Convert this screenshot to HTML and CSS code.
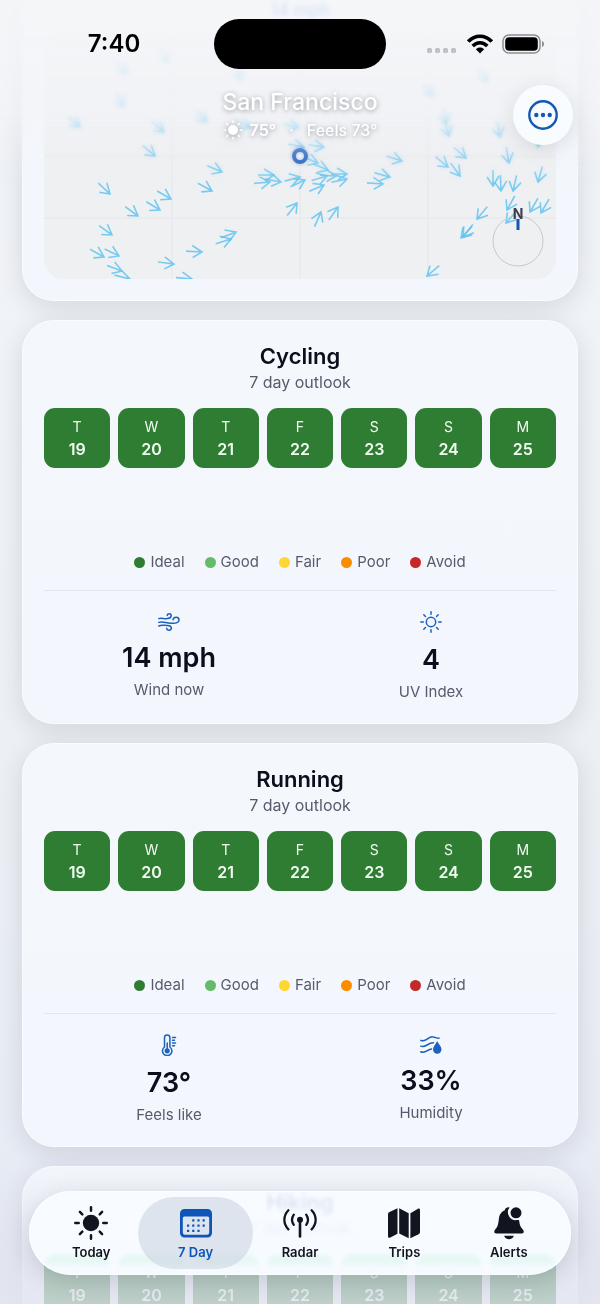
FILE: index.html
```html
<!DOCTYPE html>
<html lang="en">
<head>
<meta charset="utf-8">
<meta name="viewport" content="width=device-width, initial-scale=1">
<title>7 Day Outlook</title>
<link rel="stylesheet" href="styles.css">
</head>
<body>
<div class="app">
  <main class="feed">
    <section class="card map-card" aria-label="Wind map">
      <p class="map-value">14 mph</p>
      <svg class="map" viewBox="44 34 512 245" preserveAspectRatio="xMidYMax slice" role="img" aria-label="Wind directions">
        <defs>
          <g id="a"><path d="M-16 0H0M-10-6L0 0L-9 6"/></g>
        </defs>
        <path class="map-grid" d="M172 34V279M300 34V279M428 34V279M44 94H556M44 156H556M44 218H556"/>
        <g class="arrows">
          <use href="#a" transform="translate(80 127) rotate(40)"/>
          <use href="#a" transform="translate(124 107) rotate(60)"/>
          <use href="#a" transform="translate(127 74) rotate(50)"/>
          <use href="#a" transform="translate(168 62) rotate(60)"/>
          <use href="#a" transform="translate(164 132) rotate(40)"/>
          <use href="#a" transform="translate(207 122) rotate(45)"/>
          <use href="#a" transform="translate(241 80) rotate(70)"/>
          <use href="#a" transform="translate(250 128) rotate(30)"/>
          <use href="#a" transform="translate(299 127) rotate(10)"/>
          <use href="#a" transform="translate(304 147) rotate(10)"/>
          <use href="#a" transform="translate(324 147) rotate(8)"/>
          <use href="#a" transform="translate(433 96) rotate(50)"/>
          <use href="#a" transform="translate(446 124) rotate(80)"/>
          <use href="#a" transform="translate(449 136) rotate(75)"/>
          <use href="#a" transform="translate(487 82) rotate(60)"/>
          <use href="#a" transform="translate(500 137) rotate(80)"/>
          <use href="#a" transform="translate(538 147) rotate(100)"/>
          <use href="#a" transform="translate(155 156) rotate(40)"/>
          <use href="#a" transform="translate(222 172) rotate(23)"/>
          <use href="#a" transform="translate(212 191) rotate(29)"/>
          <use href="#a" transform="translate(110 194) rotate(43)"/>
          <use href="#a" transform="translate(171 199) rotate(30)"/>
          <use href="#a" transform="translate(160 210) rotate(31)"/>
          <use href="#a" transform="translate(138 216) rotate(36)"/>
          <use href="#a" transform="translate(112 235) rotate(36)"/>
          <use href="#a" transform="translate(104 257) rotate(29)"/>
          <use href="#a" transform="translate(119 256) rotate(26)"/>
          <use href="#a" transform="translate(122 271) rotate(20)"/>
          <use href="#a" transform="translate(130 279) rotate(14)"/>
          <use href="#a" transform="translate(192 279) rotate(5)"/>
          <use href="#a" transform="translate(174 264) rotate(7)"/>
          <use href="#a" transform="translate(202 252) rotate(3)"/>
          <use href="#a" transform="translate(231 239) rotate(-17)"/>
          <use href="#a" transform="translate(236 232) rotate(-21)"/>
          <use href="#a" transform="translate(274 175) rotate(0)"/>
          <use href="#a" transform="translate(270 182) rotate(-5)"/>
          <use href="#a" transform="translate(281 182) rotate(11)"/>
          <use href="#a" transform="translate(300 177) rotate(-15)"/>
          <use href="#a" transform="translate(297 203) rotate(-52)"/>
          <use href="#a" transform="translate(305 180) rotate(-25)"/>
          <use href="#a" transform="translate(328 170) rotate(22)"/>
          <use href="#a" transform="translate(318 163) rotate(22)"/>
          <use href="#a" transform="translate(336 176) rotate(3)"/>
          <use href="#a" transform="translate(347 174) rotate(0)"/>
          <use href="#a" transform="translate(347 179) rotate(-12)"/>
          <use href="#a" transform="translate(327 176) rotate(-16)"/>
          <use href="#a" transform="translate(324 185) rotate(-23)"/>
          <use href="#a" transform="translate(402 161) rotate(17)"/>
          <use href="#a" transform="translate(390 177) rotate(15)"/>
          <use href="#a" transform="translate(383 184) rotate(4)"/>
          <use href="#a" transform="translate(321 212) rotate(-66)"/>
          <use href="#a" transform="translate(338 207) rotate(-55)"/>
          <use href="#a" transform="translate(448 167) rotate(39)"/>
          <use href="#a" transform="translate(460 176) rotate(54)"/>
          <use href="#a" transform="translate(466 158) rotate(41)"/>
          <use href="#a" transform="translate(509 163) rotate(80)"/>
          <use href="#a" transform="translate(493 186) rotate(90)"/>
          <use href="#a" transform="translate(501 191) rotate(88)"/>
          <use href="#a" transform="translate(513 191) rotate(103)"/>
          <use href="#a" transform="translate(538 182) rotate(106)"/>
          <use href="#a" transform="translate(507 210) rotate(119)"/>
          <use href="#a" transform="translate(530 212) rotate(120)"/>
          <use href="#a" transform="translate(541 213) rotate(120)"/>
          <use href="#a" transform="translate(477 219) rotate(130)"/>
          <use href="#a" transform="translate(506 223) rotate(131)"/>
          <use href="#a" transform="translate(461 238) rotate(134)"/>
          <use href="#a" transform="translate(463 237) rotate(128)"/>
          <use href="#a" transform="translate(427 276) rotate(140)"/>
        </g>
        <circle class="pin" cx="300" cy="156" r="6"/>
        <circle class="compass-ring" cx="518" cy="241" r="25"/>
        <path class="compass-needle" d="M518 219V230"/>
        <text class="compass-label" x="518" y="219">N</text>
      </svg>
    </section>

    <section class="card">
      <h2 class="title">Cycling</h2>
      <p class="subtitle">7 day outlook</p>
      <ol class="days">
        <li class="day"><span>T</span><b>19</b></li>
        <li class="day"><span>W</span><b>20</b></li>
        <li class="day"><span>T</span><b>21</b></li>
        <li class="day"><span>F</span><b>22</b></li>
        <li class="day"><span>S</span><b>23</b></li>
        <li class="day"><span>S</span><b>24</b></li>
        <li class="day"><span>M</span><b>25</b></li>
      </ol>
      <ul class="legend">
        <li class="ideal">Ideal</li>
        <li class="good">Good</li>
        <li class="fair">Fair</li>
        <li class="poor">Poor</li>
        <li class="avoid">Avoid</li>
      </ul>
      <div class="stats">
        <div class="stat">
          <svg class="stat-icon" width="22" height="18" viewBox="0 0 22 18" aria-hidden="true"><path d="M.8 5.6C4 4.4 6 6.2 9.5 5.6C12 5.3 13.2 4.2 13.2 2.8C13.2 .3 9.5 .2 9.2 2.4M.8 9.4C5 7.6 9 11 14 10.2C18 10.6 21 9.4 21 7C21 3.4 15.4 3.6 15 6.8M.8 13C4 11.400 6 12.600 9.500 12.400C14.500 12.500 14.200 17.200 11 17.200C9.600 17.200 8.800 16.400 8.700 15.300"/></svg>
          <strong class="value">14 mph</strong>
          <span class="label">Wind now</span>
        </div>
        <div class="stat">
          <svg class="stat-icon" width="22" height="22" viewBox="0 0 22 22" aria-hidden="true"><circle cx="11" cy="11" r="4.700"/><path d="M11 .8V3.300M11 18.700V21.200M.8 11H3.300M18.700 11H21.200M3.800 3.800L5.500 5.500M16.500 16.500L18.200 18.200M3.800 18.200L5.500 16.500M16.500 5.500L18.200 3.800"/></svg>
          <strong class="value">4</strong>
          <span class="label">UV Index</span>
        </div>
      </div>
    </section>

    <section class="card">
      <h2 class="title">Running</h2>
      <p class="subtitle">7 day outlook</p>
      <ol class="days">
        <li class="day"><span>T</span><b>19</b></li>
        <li class="day"><span>W</span><b>20</b></li>
        <li class="day"><span>T</span><b>21</b></li>
        <li class="day"><span>F</span><b>22</b></li>
        <li class="day"><span>S</span><b>23</b></li>
        <li class="day"><span>S</span><b>24</b></li>
        <li class="day"><span>M</span><b>25</b></li>
      </ol>
      <ul class="legend">
        <li class="ideal">Ideal</li>
        <li class="good">Good</li>
        <li class="fair">Fair</li>
        <li class="poor">Poor</li>
        <li class="avoid">Avoid</li>
      </ul>
      <div class="stats">
        <div class="stat">
          <svg class="stat-icon" width="16" height="22" viewBox="0 0 16 22" aria-hidden="true"><path d="M3.500 13V3.600A2.700 2.700 0 0 1 8.900 3.600V13A4.700 4.700 0 1 1 3.500 13ZM6.200 9V16"/><circle class="solid" cx="6.200" cy="16.800" r="2.600"/><path d="M11.500 3.500H14.500M11.500 6.300H13.500M11.500 9H14.500M11.500 11.800H13.500"/></svg>
          <strong class="value">73°</strong>
          <span class="label">Feels like</span>
        </div>
        <div class="stat">
          <svg class="stat-icon" width="22" height="18" viewBox="0 0 22 18" aria-hidden="true"><path d="M.8 4.300C6 7 8 .2 13 .9C15.500 1.100 17 2.700 19 2.100M.8 10.200C5.500 12.500 7.500 6.500 13.500 6.700M.8 15.800C5.500 18 7.500 13.300 11.500 13"/><path class="solid" d="M17.200 5C18.500 8 21.500 10.500 21.500 13.300A4.200 4.300 0 0 1 13 13.300C13 10.500 16 8 17.200 5Z"/></svg>
          <strong class="value">33%</strong>
          <span class="label">Humidity</span>
        </div>
      </div>
    </section>

    <section class="card">
      <h2 class="title">Hiking</h2>
      <p class="subtitle">7 day outlook</p>
      <ol class="days">
        <li class="day"><span>T</span><b>19</b></li>
        <li class="day"><span>W</span><b>20</b></li>
        <li class="day"><span>T</span><b>21</b></li>
        <li class="day"><span>F</span><b>22</b></li>
        <li class="day"><span>S</span><b>23</b></li>
        <li class="day"><span>S</span><b>24</b></li>
        <li class="day"><span>M</span><b>25</b></li>
      </ol>
    </section>
  </main>

  <div class="top-fade"></div>
  <div class="bottom-fade"></div>

  <header class="top">
    <div class="status">
      <time class="clock">7:40</time>
      <div class="island"></div>
      <div class="indicators">
        <svg width="32" height="20" viewBox="0 0 32 20" fill="#bfc1c4" aria-hidden="true"><rect x="1" y="14" width="5" height="5" rx="1.500"/><rect x="9" y="14" width="5" height="5" rx="1.500"/><rect x="17" y="14" width="5" height="5" rx="1.500"/><rect x="25" y="14" width="5" height="5" rx="1.500"/></svg>
        <svg width="26" height="20" viewBox="0 0 26 20" fill="none" stroke="#000" stroke-width="3.600" aria-hidden="true"><path d="M1.300 7.600C8 .4 18 .4 24.700 7.600"/><path d="M5.700 12C10 7.600 16 7.600 20.300 12"/><path fill="#000" stroke="none" d="M13 19.500L8.900 15.300C11.200 13 14.800 13 17.100 15.300Z"/></svg>
        <svg width="43" height="20" viewBox="0 0 43 20" aria-hidden="true"><rect x="1" y="1" width="37" height="18" rx="6" fill="none" stroke="#8c8d90" stroke-width="1.500"/><rect x="3.200" y="3.200" width="32.600" height="13.600" rx="4" fill="#000"/><path d="M40 7C42.700 7.600 42.700 12.400 40 13Z" fill="#8c8d90"/></svg>
      </div>
    </div>
    <div class="place">
      <h1 class="city">San Francisco</h1>
      <p class="now">
        <svg width="20" height="20" viewBox="0 0 20 20" aria-hidden="true"><circle cx="10" cy="10" r="5" fill="#fff"/><path stroke="#fff" stroke-width="1.600" stroke-linecap="round" d="M10 1V2.500M10 17.500V19M1 10H2.500M17.500 10H19M3.600 3.600L4.700 4.700M15.300 15.300L16.400 16.400M3.600 16.400L4.700 15.300M15.300 4.700L16.400 3.600"/></svg>
        <span class="temp">75°</span><span>·</span><span>Feels 73°</span>
      </p>
    </div>
    <button class="more" type="button" aria-label="More">
      <svg width="30" height="30" viewBox="0 0 30 30" aria-hidden="true"><circle cx="15" cy="15" r="13.700" fill="none" stroke="#1457b5" stroke-width="2.400"/><g fill="#1457b5"><circle cx="8.300" cy="15" r="2.200"/><circle cx="15" cy="15" r="2.200"/><circle cx="21.700" cy="15" r="2.200"/></g></svg>
    </button>
  </header>

  <nav class="tabs" aria-label="Main">
    <button class="tab" type="button">
      <svg width="36" height="36" viewBox="0 0 36 36" aria-hidden="true"><circle cx="18" cy="18" r="8.200" fill="currentColor"/><path stroke="currentColor" stroke-width="2.500" stroke-linecap="round" d="M18 2.300V5.700M18 30.300V33.700M2.300 18H5.700M30.300 18H33.700M6.900 6.900L9.300 9.300M26.700 26.700L29.100 29.100M6.900 29.100L9.300 26.700M26.700 9.300L29.100 6.900"/></svg>
      <span>Today</span>
    </button>
    <button class="tab active" type="button" aria-current="page">
      <svg width="36" height="36" viewBox="0 0 36 36" fill="currentColor" aria-hidden="true"><path fill-rule="evenodd" d="M6.500 4H29.500A4.500 4.500 0 0 1 34 8.500V28A4.500 4.500 0 0 1 29.500 32.500H6.500A4.500 4.500 0 0 1 2 28V8.500A4.500 4.500 0 0 1 6.500 4ZM4.800 13V27.500A2.200 2.200 0 0 0 7 29.700H29A2.200 2.200 0 0 0 31.200 27.500V13A1.500 1.500 0 0 0 29.700 11.500H6.300A1.500 1.500 0 0 0 4.800 13Z"/><path d="M14.200 14.300h2.200v2.200h-2.200zM19.400 14.300h2.200v2.200h-2.200zM24.600 14.300h2.200v2.200h-2.200zM9 19.500h2.200v2.200h-2.200zM14.200 19.500h2.200v2.200h-2.200zM19.400 19.500h2.200v2.200h-2.200zM24.600 19.500h2.200v2.200h-2.200zM9 24.700h2.200v2.200h-2.200zM14.200 24.700h2.200v2.200h-2.200zM19.400 24.700h2.200v2.200h-2.200z"/></svg>
      <span>7 Day</span>
    </button>
    <button class="tab" type="button">
      <svg width="36" height="36" viewBox="0 0 36 36" fill="none" stroke="currentColor" stroke-width="2.300" stroke-linecap="round" aria-hidden="true"><path stroke-width="2.600" d="M18 15V31.500"/><circle cx="18" cy="14.700" r="3" fill="currentColor" stroke="none"/><path d="M11.800 9.700C9.700 12.700 9.700 16.900 11.800 19.900M24.200 9.700C26.300 12.700 26.300 16.900 24.200 19.900M6.400 5.200C1 10.700 1 18.900 6.400 24.400M29.600 5.200C35 10.700 35 18.900 29.600 24.400"/></svg>
      <span>Radar</span>
    </button>
    <button class="tab" type="button">
      <svg width="36" height="36" viewBox="0 0 36 36" fill="currentColor" aria-hidden="true"><path d="M2 9.400C2 8.200 2.400 7.500 3.500 6.900L11.500 3.200V28.800L4.400 32.600C3 33.200 2 32.700 2 31.200Z"/><path d="M13.200 3.200L22.700 8.300V33.300L13.200 28.600Z"/><path d="M24.400 8.200L31.600 3.900C33 3.200 34 3.700 34 5.200V26.800C34 28 33.600 28.700 32.500 29.300L24.400 33.300Z"/></svg>
      <span>Trips</span>
    </button>
    <button class="tab" type="button">
      <svg width="36" height="36" viewBox="0 0 36 36" fill="currentColor" aria-hidden="true"><path d="M18.500 2.400A8 8 0 0 0 25.800 15.100C28 15 28 15 28.200 16C28.800 20.500 29.600 22 31.800 24.500C33.400 26.400 32.800 28.400 30.800 28.400H5.200C3.200 28.400 2.600 26.400 4.200 24.500C6.800 21.600 7.200 19.500 7.800 14.500C8.300 9.500 10 6.900 13.600 5.500C14.200 3.300 16.200 2 18.500 2.400Z"/><circle cx="25" cy="7.800" r="5.500"/><path d="M13.200 30.700H22.800C22 35.300 14 35.300 13.200 30.700Z"/></svg>
      <span>Alerts</span>
    </button>
  </nav>
</div>
</body>
</html>
```
FILE: styles.css
```css
* { box-sizing: border-box; }

body {
  margin: 0;
  font-family: Inter, "Liberation Sans", sans-serif;
  color: #0b0f1c;
}

h1, h2, p, ol, ul { margin: 0; padding: 0; }
ol, ul { list-style: none; }
svg { display: block; }

button {
  border: 0;
  padding: 0;
  background: none;
  font: inherit;
  color: inherit;
}

.app {
  position: relative;
  height: 100vh;
  overflow: hidden;
  background: linear-gradient(#f2f4f8, #edf1f5 50%, #e6eaf4);
}

.feed {
  display: flex;
  flex-direction: column;
  gap: 19px;
  padding: 0 22px;
}

.card {
  padding: 21px;
  border: 1px solid #fafcff;
  border-radius: 32px;
  background: linear-gradient(#f4f8fc, #f3f6fd);
  box-shadow: 0 6px 26px rgba(30, 40, 60, 0.13);
}

.map-card {
  padding-top: 0;
  border-top: 0;
  border-radius: 0 0 32px 32px;
}

.map-value {
  padding-bottom: 14px;
  font-size: 17px;
  font-weight: 600;
  line-height: 20px;
  text-align: center;
  color: #2f7ae5;
}

.map {
  width: 100%;
  height: 245px;
  border-radius: 20px;
  background: #eff0f2;
}

.map-grid { stroke: #e5e6ea; stroke-width: 1; fill: none; }
.arrows { stroke: #59c1f0; stroke-opacity: 0.8; stroke-width: 1.6; fill: none; }
.pin { fill: #fff; stroke: #0f52b4; stroke-width: 4; }
.compass-ring { fill: none; stroke: #c3c9d2; stroke-width: 1; }
.compass-needle { stroke: #1457b5; stroke-width: 3; }
.compass-label { font-size: 14px; font-weight: 700; fill: #3b4050; text-anchor: middle; }

.title {
  font-size: 22px;
  font-weight: 600;
  line-height: 28px;
  text-align: center;
}

.subtitle {
  font-size: 16px;
  line-height: 24px;
  text-align: center;
  color: #565b6c;
}

.days {
  display: grid;
  grid-template-columns: repeat(7, 1fr);
  gap: 8px;
  margin-top: 14px;
}

.day {
  display: flex;
  flex-direction: column;
  align-items: center;
  padding: 8px 0;
  border-radius: 11px;
  background: #2f7d32;
  color: #f2fbf2;
  font-size: 14px;
  line-height: 22px;
}

.day b { font-size: 16px; font-weight: 600; }

.legend {
  display: flex;
  justify-content: center;
  gap: 20px;
  margin: 84px 0 18px;
  font-size: 15px;
  line-height: 20px;
  color: #565b6c;
}

.legend li { display: flex; align-items: center; gap: 5px; }

.legend li::before {
  content: "";
  width: 11px;
  height: 11px;
  border-radius: 50%;
  background: currentColor;
}

.legend .ideal::before { background: #2f7d32; }
.legend .good::before { background: #66bb6a; }
.legend .fair::before { background: #fdd835; }
.legend .poor::before { background: #fb8c00; }
.legend .avoid::before { background: #c62828; }

.stats {
  display: grid;
  grid-template-columns: 1fr 1fr;
  gap: 12px;
  align-items: center;
  padding-top: 20px;
  border-top: 1px solid #e2e6ec;
}

.stat { display: flex; flex-direction: column; align-items: center; }

.stat-icon {
  margin-bottom: 10px;
  fill: none;
  stroke: #1b61bd;
  stroke-width: 1.5;
  stroke-linecap: round;
  stroke-linejoin: round;
}

.stat-icon .solid { fill: #1b61bd; stroke: none; }
.value { font-size: 27px; font-weight: 600; line-height: 34px; }
.label { margin-top: 5px; font-size: 15px; line-height: 20px; color: #565b6c; }

.top-fade, .bottom-fade {
  position: absolute;
  left: 0;
  right: 0;
}

.top-fade {
  top: 0;
  height: 190px;
  background: linear-gradient(rgba(244, 245, 248, 0.88) 20%, rgba(243, 244, 248, 0.62) 60%, rgba(243, 244, 248, 0));
  backdrop-filter: blur(2px);
  mask-image: linear-gradient(#000 60%, transparent);
}

.bottom-fade {
  bottom: 0;
  height: 150px;
  background: linear-gradient(rgba(224, 227, 238, 0), rgba(224, 227, 238, 0.72) 70%, rgba(226, 229, 240, 0.8));
}

.top {
  position: absolute;
  top: 0;
  left: 0;
  right: 0;
}

.status {
  display: grid;
  grid-template-columns: 1fr 172px 1fr;
  align-items: center;
  padding-top: 19px;
}

.clock {
  padding-left: 14px;
  font-size: 24px;
  font-weight: 600;
  line-height: 28px;
  text-align: center;
  color: #000;
}

.island { height: 50px; border-radius: 25px; background: #000; }

.indicators { display: flex; align-items: center; justify-content: center; gap: 9px; padding-right: 16px; }

.place {
  padding-top: 18px;
  text-align: center;
  color: #fff;
  text-shadow: 0 1px 5px rgba(60, 65, 75, 0.5);
}

.city { font-size: 23px; font-weight: 500; line-height: 30px; }

.now {
  display: flex;
  justify-content: center;
  align-items: center;
  gap: 13px;
  font-size: 16px;
  font-weight: 500;
  line-height: 26px;
}

.now svg { filter: drop-shadow(0 1px 3px rgba(60, 65, 75, 0.5)); }
.temp { margin-left: -6px; font-weight: 600; }

.more {
  position: absolute;
  top: 85px;
  right: 27px;
  display: grid;
  place-items: center;
  width: 60px;
  height: 60px;
  border-radius: 50%;
  background: #f9fcff;
  box-shadow: 0 4px 20px rgba(30, 40, 60, 0.12);
}

.tabs {
  position: absolute;
  left: 29px;
  right: 29px;
  bottom: 29px;
  display: grid;
  grid-template-columns: repeat(5, 1fr);
  padding: 6px 10px;
  border-radius: 42px;
  background: linear-gradient(rgba(247, 250, 255, 0.84) 84%, rgba(247, 250, 255, 0.97) 92%);
  backdrop-filter: blur(2px) saturate(3) brightness(1.1);
  box-shadow: 0 6px 24px rgba(30, 40, 60, 0.16), inset 0 0 0 1px rgba(255, 255, 255, 0.7);
}

.tab {
  position: relative;
  display: flex;
  flex-direction: column;
  align-items: center;
  gap: 2px;
  padding: 8px 0;
  font-size: 13px;
  font-weight: 600;
  line-height: 18px;
  color: #12151f;
}

.tab svg, .tab span { position: relative; }
.tab.active { color: #0d55b8; }

.tab.active::before {
  content: "";
  position: absolute;
  inset: 0 -5px;
  border-radius: 36px;
  background: rgba(198, 206, 220, 0.5);
}
```
